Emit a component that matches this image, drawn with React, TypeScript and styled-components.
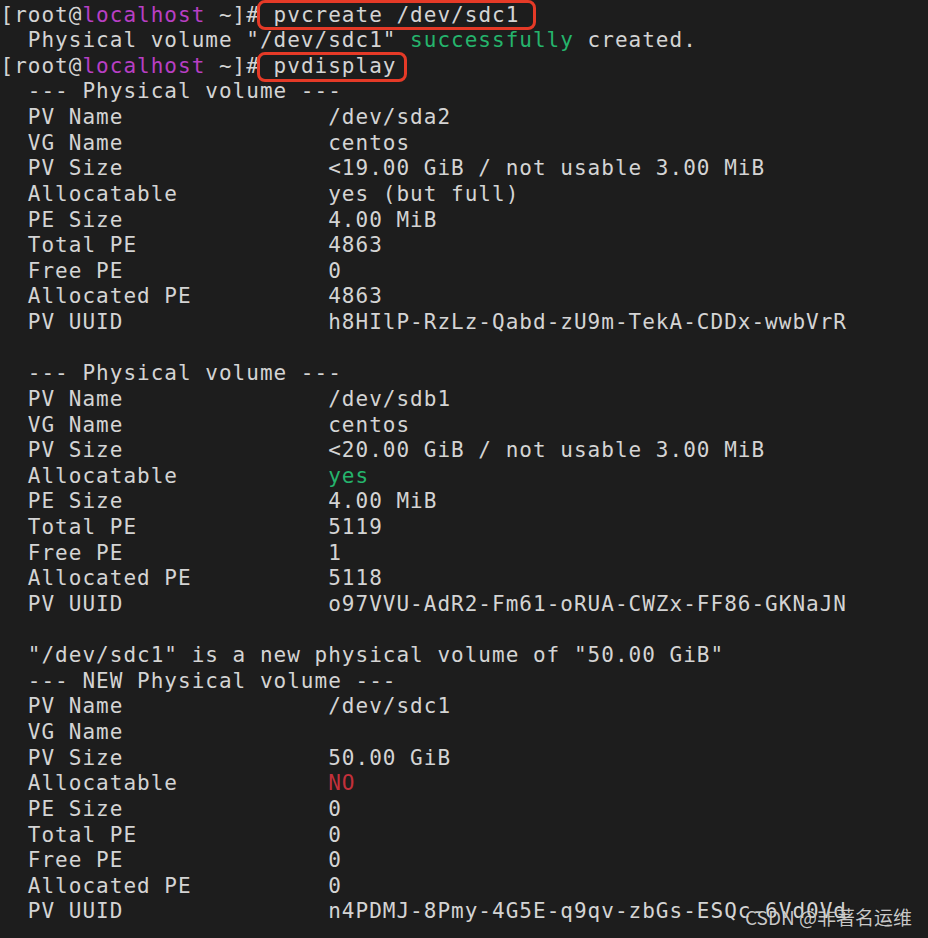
import React from "react";
import styled, { createGlobalStyle } from "styled-components";

const Global = createGlobalStyle`
  html, body { margin: 0; padding: 0; background: #1d1d1d; }
  #root { width: 928px; height: 938px; }
`;

const Terminal = styled.div`
  position: relative;
  width: 928px;
  height: 938px;
  overflow: hidden;
  box-sizing: border-box;
  padding: 2.5px 0 0 0.5px;
  background: #1d1d1d;
  color: #d4d4d4;
  font-family: "DejaVu Sans Mono", "Liberation Mono", monospace;
  font-size: 21px;
  letter-spacing: 1.01px;
`;

const Line = styled.div`
  height: 25.63px;
  line-height: 25.63px;
  white-space: pre;
`;

const Host = styled.span`
  color: #b83fc4;
`;

const Good = styled.span`
  color: #25b46c;
`;

const Bad = styled.span`
  color: #c3303b;
`;

const Cmd = styled.span<{ $left: number; $right: number; $top: number; $bottom: number }>`
  position: relative;
  display: inline-block;
  height: 25.63px;
  &::after {
    content: "";
    position: absolute;
    left: ${(p) => -p.$left}px;
    right: ${(p) => -p.$right}px;
    top: ${(p) => -p.$top}px;
    bottom: ${(p) => -p.$bottom}px;
    border: 3.5px solid #e53a27;
    border-radius: 8px;
  }
`;

const Watermark = styled.div`
  position: absolute;
  right: 16px;
  bottom: 8px;
  font-family: "Noto Sans CJK SC", "Noto Sans", sans-serif;
  font-size: 19px;
  letter-spacing: 0;
  color: rgba(235, 235, 235, 0.85);
  text-shadow: 0 0 1px rgba(0, 0, 0, 0.6);
`;

const pad = (s: string) => s.padEnd(22, " ");

type Row = [string, React.ReactNode];

const block = (rows: Row[]) =>
  rows.map(([k, v], i) => (
    <Line key={k + i}>
      {"  " + pad(k)}
      {v}
    </Line>
  ));

const Prompt = () => (
  <>
    [root@<Host>localhost</Host> ~]#{" "}
  </>
);

export default function App() {
  return (
    <>
      <Global />
      <Terminal>
        <Line>
          <Prompt />
          <Cmd $left={17} $right={17} $top={3} $bottom={2}>pvcreate /dev/sdc1</Cmd>
        </Line>
        <Line>
          {'  Physical volume "/dev/sdc1" '}
          <Good>successfully</Good> created.
        </Line>
        <Line>
          <Prompt />
          <Cmd $left={17} $right={11} $top={2} $bottom={3}>pvdisplay</Cmd>
        </Line>
        <Line>{"  --- Physical volume ---"}</Line>
        {block([
          ["PV Name", "/dev/sda2"],
          ["VG Name", "centos"],
          ["PV Size", "<19.00 GiB / not usable 3.00 MiB"],
          ["Allocatable", "yes (but full)"],
          ["PE Size", "4.00 MiB"],
          ["Total PE", "4863"],
          ["Free PE", "0"],
          ["Allocated PE", "4863"],
          ["PV UUID", "h8HIlP-RzLz-Qabd-zU9m-TekA-CDDx-wwbVrR"],
        ])}
        <Line> </Line>
        <Line>{"  --- Physical volume ---"}</Line>
        {block([
          ["PV Name", "/dev/sdb1"],
          ["VG Name", "centos"],
          ["PV Size", "<20.00 GiB / not usable 3.00 MiB"],
          ["Allocatable", <Good>yes</Good>],
          ["PE Size", "4.00 MiB"],
          ["Total PE", "5119"],
          ["Free PE", "1"],
          ["Allocated PE", "5118"],
          ["PV UUID", "o97VVU-AdR2-Fm61-oRUA-CWZx-FF86-GKNaJN"],
        ])}
        <Line> </Line>
        <Line>{'  "/dev/sdc1" is a new physical volume of "50.00 GiB"'}</Line>
        <Line>{"  --- NEW Physical volume ---"}</Line>
        {block([
          ["PV Name", "/dev/sdc1"],
          ["VG Name", ""],
          ["PV Size", "50.00 GiB"],
          ["Allocatable", <Bad>NO</Bad>],
          ["PE Size", "0"],
          ["Total PE", "0"],
          ["Free PE", "0"],
          ["Allocated PE", "0"],
          ["PV UUID", "n4PDMJ-8Pmy-4G5E-q9qv-zbGs-ESQc-6Vd0Vd"],
        ])}
        <Watermark>CSDN @非著名运维</Watermark>
      </Terminal>
    </>
  );
}
